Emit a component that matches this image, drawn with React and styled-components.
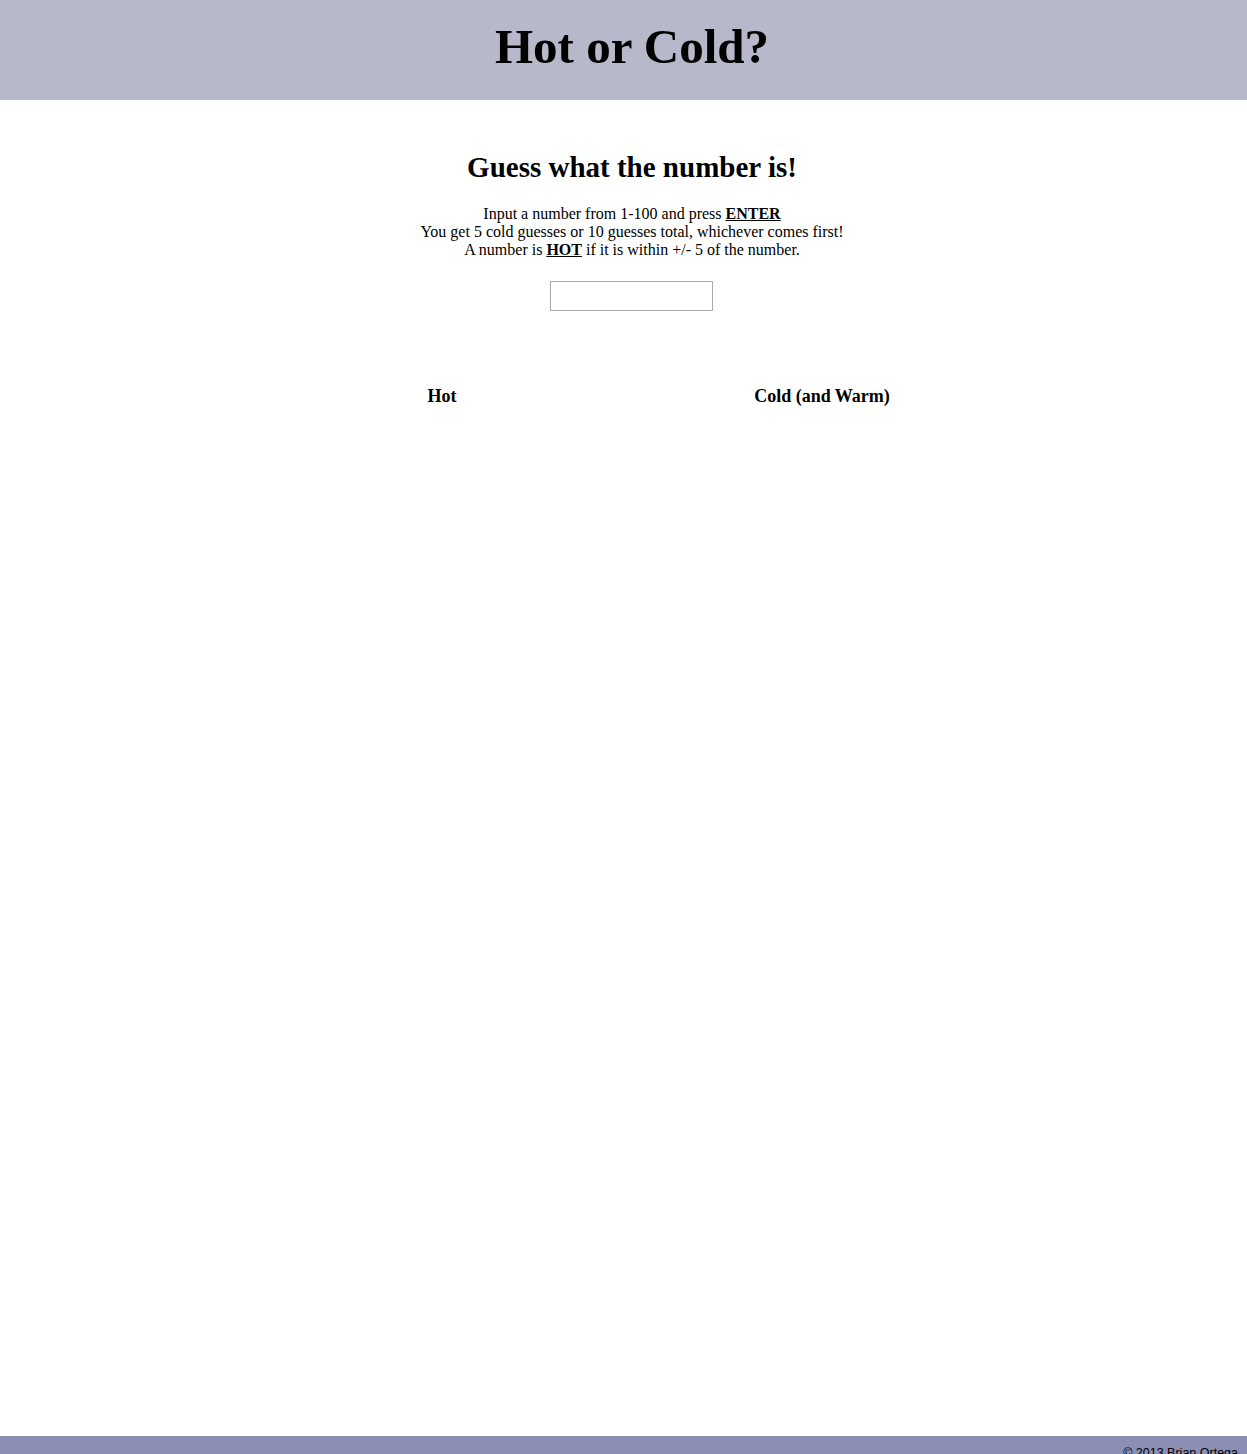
import React from "react";
import styled, { createGlobalStyle } from "styled-components";

const Global = createGlobalStyle`
  html, body { margin: 0; padding: 0; overflow: hidden; }
  body { font-family: "Liberation Serif", "Times New Roman", serif; color: #000; background: #fff; }
`;

const Page = styled.div`
  display: flex;
  flex-direction: column;
  height: 1454px;
`;

const Header = styled.header`
  height: 100px;
  box-sizing: border-box;
  background: #b7b9ca;
  display: flex;
  align-items: center;
  justify-content: center;
  padding: 0 0 7px 17px;
`;

const Title = styled.h1`
  margin: 0;
  font-size: 49px;
  font-weight: bold;
  line-height: 1;
`;

const Main = styled.main`
  flex: 1;
  display: flex;
  flex-direction: column;
  align-items: center;
  padding-left: 17px;
  padding-top: 50px;
`;

const Subtitle = styled.h2`
  margin: 0;
  font-size: 29px;
  line-height: 34px;
  font-weight: bold;
`;

const Instructions = styled.p`
  margin: 21px 0 0;
  font-size: 16px;
  line-height: 18px;
  text-align: center;
`;

const Key = styled.span`
  font-weight: bold;
  text-decoration: underline;
`;

const GuessInput = styled.input`
  margin-top: 22px;
  margin-right: 2px;
  width: 163px;
  height: 30px;
  box-sizing: border-box;
  border: 1px solid #aaaaaa;
  outline: none;
  font-family: inherit;
  font-size: 15px;
`;

const Columns = styled.div`
  display: grid;
  grid-template-columns: 380px 380px;
  margin-top: 74px;
`;

const ColumnHead = styled.h3`
  margin: 0;
  font-size: 18px;
  line-height: 22px;
  font-weight: bold;
  text-align: center;
`;

const Footer = styled.footer`
  height: 18px;
  background: #8c8eb4;
  overflow: hidden;
  text-align: right;
  padding: 10px 9px 0 0;
  box-sizing: border-box;
  font-family: "Liberation Sans", Arial, sans-serif;
  font-size: 12.5px;
  line-height: 14px;
`;

export default function App() {
  return (
    <Page>
      <Global />
      <Header>
        <Title>Hot or Cold?</Title>
      </Header>
      <Main>
        <Subtitle>Guess what the number is!</Subtitle>
        <Instructions>
          Input a number from 1-100 and press <Key>ENTER</Key>
          <br />
          You get 5 cold guesses or 10 guesses total, whichever comes first!
          <br />
          A number is <Key>HOT</Key> if it is within +/- 5 of the number.
        </Instructions>
        <GuessInput type="text" />
        <Columns>
          <ColumnHead>Hot</ColumnHead>
          <ColumnHead>Cold (and Warm)</ColumnHead>
        </Columns>
      </Main>
      <Footer>© 2013 Brian Ortega</Footer>
    </Page>
  );
}
